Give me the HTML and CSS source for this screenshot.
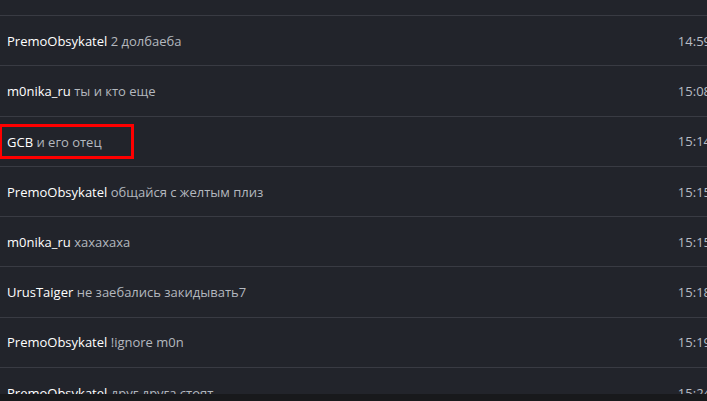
FILE: index.html
```html
<!DOCTYPE html>
<html lang="ru">
<head>
<meta charset="utf-8">
<link rel="stylesheet" href="styles.css">
</head>
<body>
<div class="list">
  <div class="lead"></div>
  <div class="row"><div class="msg"><span class="user">PremoObsykatel</span> <span class="text">2 долбаеба</span></div><span class="time">14:59</span></div>
  <div class="row"><div class="msg"><span class="user">m0nika_ru</span> <span class="text">ты и кто еще</span></div><span class="time">15:08</span></div>
  <div class="row"><div class="msg boxed"><span class="user">GCB</span> <span class="text">и его отец</span></div><span class="time">15:14</span></div>
  <div class="row"><div class="msg"><span class="user">PremoObsykatel</span> <span class="text">общайся с желтым плиз</span></div><span class="time">15:15</span></div>
  <div class="row"><div class="msg"><span class="user">m0nika_ru</span> <span class="text">хахахаха</span></div><span class="time">15:15</span></div>
  <div class="row"><div class="msg"><span class="user">UrusTaiger</span> <span class="text">не заебались закидывать7</span></div><span class="time">15:18</span></div>
  <div class="row"><div class="msg"><span class="user">PremoObsykatel</span> <span class="text">!ignore m0n</span></div><span class="time">15:19</span></div>
  <div class="row"><div class="msg"><span class="user">PremoObsykatel</span> <span class="text">друг друга стоят</span></div><span class="time">15:24</span></div>
</div>
<div class="footer"></div>
</body>
</html>
```
FILE: styles.css
```css
html, body {
  margin: 0;
  padding: 0;
  background: #22242b;
  overflow: hidden;
  height: 100%;
}
body {
  font-family: "Open Sans", "Noto Sans", sans-serif;
  font-size: 13px;
}
.list {
  width: 740px;
}
.lead {
  height: 15px;
}
.row {
  box-sizing: border-box;
  height: 50.3px;
  border-top: 1px solid #393b43;
  display: flex;
  align-items: center;
  justify-content: space-between;
  padding: 0 29px 0 7px;
}
.msg {
  white-space: nowrap;
}
.boxed {
  outline: 3px solid #ff0000;
  outline-offset: 0;
  margin-left: -5px;
  padding: 6px 29px 5px 5px;
}
.user {
  color: #ffffff;
}
.text {
  color: #b4b8bf;
}
.time {
  color: #b8bcc4;
}
.footer {
  position: fixed;
  left: 0;
  right: 0;
  bottom: 0;
  height: 7px;
  background: #18191c;
}
```
